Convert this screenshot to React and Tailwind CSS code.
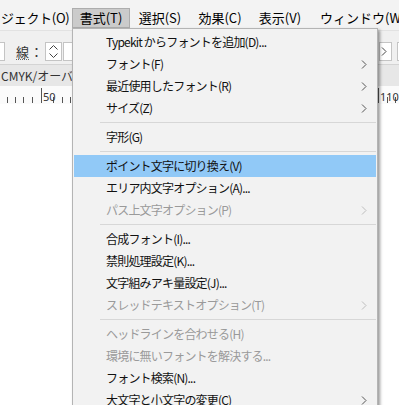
const items = [
  { t: 'Typekit からフォントを追加(D)...' },
  { t: 'フォント(F)', sub: true },
  { t: '最近使用したフォント(R)', sub: true },
  { t: 'サイズ(Z)', sub: true },
  'sep',
  { t: '字形(G)' },
  'sep',
  { t: 'ポイント文字に切り換え(V)', hl: true },
  { t: 'エリア内文字オプション(A)...' },
  { t: 'パス上文字オプション(P)', sub: true, dis: true },
  'sep',
  { t: '合成フォント(I)...' },
  { t: '禁則処理設定(K)...' },
  { t: '文字組みアキ量設定(J)...' },
  { t: 'スレッドテキストオプション(T)', sub: true, dis: true },
  'sep',
  { t: 'ヘッドラインを合わせる(H)', dis: true },
  { t: '環境に無いフォントを解決する...', dis: true },
  { t: 'フォント検索(N)...' },
  { t: '大文字と小文字の変更(C)', sub: true },
];

function Chevron({ color }) {
  return (
    <svg width="6" height="9" viewBox="0 0 6 9" className="shrink-0">
      <path d="M1 0.5 L5 4.5 L1 8.5" fill="none" stroke={color} strokeWidth="1" />
    </svg>
  );
}

function Spinner() {
  return (
    <div className="w-[17px] h-[19px] bg-white border border-[#c4c4c4] flex flex-col items-center justify-center gap-[3px]">
      <svg width="9" height="5" viewBox="0 0 9 5">
        <path d="M0.5 4.5 L4.5 0.5 L8.5 4.5" fill="none" stroke="#444" strokeWidth="1" />
      </svg>
      <svg width="9" height="5" viewBox="0 0 9 5">
        <path d="M0.5 0.5 L4.5 4.5 L8.5 0.5" fill="none" stroke="#444" strokeWidth="1" />
      </svg>
    </div>
  );
}

function Ruler() {
  const minor = [7, 15, 23, 32, 53, 62, 70, 387, 395];
  return (
    <svg width="399" height="18" viewBox="0 0 399 18" className="block">
      {minor.map((x) => (
        <line key={x} x1={x + 0.5} y1="11" x2={x + 0.5} y2="17" stroke="#555" strokeWidth="1" />
      ))}
      <line x1="41.5" y1="2" x2="41.5" y2="17" stroke="#555" strokeWidth="1" />
      <line x1="378.5" y1="2" x2="378.5" y2="17" stroke="#555" strokeWidth="1" />
      <text x="43" y="15" fontSize="11" fill="#333" fontFamily="Noto Sans, sans-serif">50</text>
      <text x="380" y="15" fontSize="11" fill="#333" fontFamily="Noto Sans, sans-serif">110</text>
    </svg>
  );
}

function Menu() {
  return (
    <div className="absolute left-[72px] top-[28px] w-[306px] h-[400px] bg-[#f2f2f2] border border-[#b4b4b4] shadow-[2px_2px_3px_rgba(0,0,0,0.4)] pt-[2px] tracking-[-0.8px]">
      {items.map((it, i) =>
        it === 'sep' ? (
          <div key={i} className="h-[7px] flex items-center ml-[27px] mr-px">
            <div className="h-px w-full bg-[#d7d7d7]" />
          </div>
        ) : (
          <div
            key={i}
            className={
              'h-[22px] mx-px flex items-center justify-between pl-[32px] pr-[9px] text-[12px] leading-[22px] ' +
              (it.hl ? 'bg-[#91c9f7] ' : '') +
              (it.dis ? 'text-[#9a9a9a]' : 'text-[#111]')
            }
          >
            <span className="whitespace-nowrap">{it.t}</span>
            {it.sub && <Chevron color={it.dis ? '#bdbdbd' : '#555'} />}
          </div>
        )
      )}
    </div>
  );
}

export default function App() {
  return (
    <div className="relative w-[399px] h-[405px] overflow-hidden bg-white font-['Noto_Sans_CJK_JP','Noto_Sans',sans-serif]">
      {/* menubar */}
      <div className="h-[30px] bg-[#f3f3f3] flex items-end text-[13px] text-black whitespace-nowrap">
        <div className="shrink-0 w-[72px] h-[20px] mb-[2px] flex items-center pl-[1px] tracking-[-0.3px]">ジェクト(O)</div>
        <div className="shrink-0 w-[58px] h-[20px] mb-[2px] flex items-center justify-center bg-[#cbcbcb] border border-[#adadad]">書式(T)</div>
        <div className="shrink-0 w-[60px] h-[20px] mb-[2px] flex items-center justify-center">選択(S)</div>
        <div className="shrink-0 w-[60px] h-[20px] mb-[2px] flex items-center justify-center">効果(C)</div>
        <div className="shrink-0 w-[60px] h-[20px] mb-[2px] flex items-center justify-center">表示(V)</div>
        <div className="shrink-0 h-[20px] mb-[2px] flex items-center pl-[10px]">ウィンドウ(W)</div>
      </div>

      {/* toolbar */}
      <div className="h-[34px] bg-[#f0f0f0] border-t border-[#e2e2e2] flex items-start justify-between pt-[11px]">
        <div className="flex items-start">
          <div className="w-[5px] h-[19px] bg-white border-y border-r border-[#c4c4c4]" />
          <div className="ml-[11px] h-[19px] flex items-center text-[13px] text-[#333]">
            <span className="border-b border-dotted border-[#666] leading-[15px]">線</span>
            <span className="ml-[1px] w-[14px]">：</span>
          </div>
          <div className="ml-[1px]">
            <Spinner />
          </div>
          <div className="ml-[1px] w-[20px] h-[19px] bg-white border border-[#c4c4c4]" />
        </div>
        <div className="flex items-start mr-[-8px]">
          <div className="w-[13px] h-[19px] bg-white border border-[#c4c4c4] flex items-center pl-[1px]">
            <Chevron color="#444" />
          </div>
          <div className="ml-[5px] w-[10px] h-[19px] bg-white border border-[#c4c4c4]" />
        </div>
      </div>

      {/* label row */}
      <div className="h-[22px] bg-[#e7e7e7] border-t border-[#d4d4d4] flex items-center pl-[1px] text-[12px] text-[#333] whitespace-nowrap">
        CMYK/オーバープリント
      </div>

      {/* ruler */}
      <div className="bg-[#fbfbfb]">
        <Ruler />
      </div>

      <Menu />
    </div>
  );
}
